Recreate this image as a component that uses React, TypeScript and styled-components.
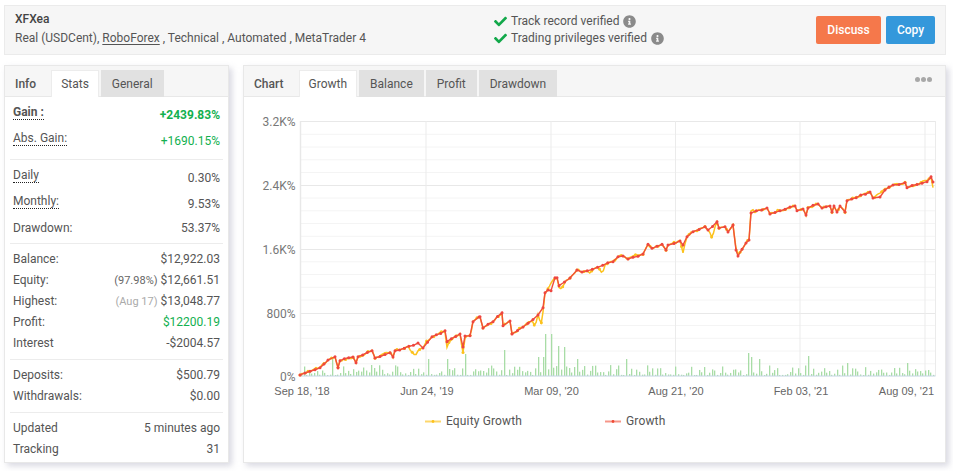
import React from "react";
import styled, { createGlobalStyle } from "styled-components";
import { FaCheck, FaInfoCircle } from "react-icons/fa";

const GROWTH: number[][] = [
  [300, 375], [320, 367.7], [328, 360], [335, 356.7], [338, 367.7], [340, 360.7], [353, 357], [356, 362.7],
  [358, 356.7], [372, 350.7], [375, 358], [390, 352.7], [393, 357], [395, 350.7], [418, 343], [423, 348],
  [432, 336.7], [445, 330.7], [447, 341.7], [460, 334], [463, 347], [465, 336], [470, 335.7], [473, 321.7],
  [479, 317], [480, 316.7], [483, 328], [493, 321.7], [502, 312.7], [503, 325.7], [510, 321], [512, 334],
  [523, 327], [538, 315], [543, 307.7], [545, 292.7], [548, 290], [551, 290.7], [555, 277.7], [557, 277.7],
  [559, 285.7], [570, 278], [577, 270], [582, 272], [613, 261.7], [618, 256.7], [623, 256], [628, 259],
  [643, 254], [648, 244.3], [652, 248.3], [662, 244.3], [666, 250], [668, 245], [680, 241], [683, 245],
  [687, 236.7], [693, 231.7], [705, 226.7], [708, 230], [717, 221.7], [719, 228], [725, 226.7], [728, 232],
  [733, 225], [736, 250], [738, 256], [746, 243], [749, 240], [751, 213], [767, 208], [770, 214],
  [795, 206], [797, 210.7], [803, 209], [806, 215], [808, 208], [818, 204], [822, 208], [830, 206],
  [832, 212], [834, 206], [837, 212], [840, 206], [845, 212], [847, 200.7], [870, 192], [873, 198],
  [880, 197], [885, 190], [893, 185], [905, 182.7], [907, 187.7], [927, 181.7], [931, 176.7], [933, 182],
];

// where the equity line leaves the growth line: [x, half width, depth]
const EQUITY_DIPS: number[][] = [
  [384, 6, -1.5], [415, 7, 13], [427, 4, -3], [447, 3, 5], [463, 3, 6], [475, 3, -1.5], [535, 3, 10], [541, 3, 14],
  [551, 4, -7], [562, 4, 6], [590, 6, 3], [602, 4, 8], [635, 6, -1.5], [683, 3, 8], [712, 4, 12], [737, 3, -3],
  [752, 3, -3], [880, 7, -4], [925, 5, -2], [933, 2, 5],
];

const BAR_PEAKS: Record<number, number> = {
  333: 17, 429: 17, 447: 17, 465: 22, 504: 26, 538: 19, 543: 19, 546: 42, 551: 42, 559: 30, 564: 29,
  577: 17, 626: 17, 749: 23, 751: 19, 759: 17, 808: 20, 847: 13, 907: 13,
};

const noise = (i: number) => Math.abs(Math.sin(i * 12.9898) * 43758.5453) % 1;

const barHeights = () => {
  const bars: number[][] = [];
  for (let i = 0; i < 244; i++) {
    const x = Math.round(301 + i * 2.6);
    const hash = noise(i);
    let h = 1 + hash * hash * 10;
    for (const key of Object.keys(BAR_PEAKS)) {
      if (Math.abs(Number(key) - x) < 1.4) h = BAR_PEAKS[Number(key)];
    }
    bars.push([x, h]);
  }
  return bars;
};

// split a polyline into short steps with a little roughness, like daily samples
const sample = (line: number[][], step: number) => {
  const out: number[][] = [];
  for (let i = 0; i < line.length - 1; i++) {
    const [x1, y1] = line[i];
    const [x2, y2] = line[i + 1];
    const n = Math.max(1, Math.round((x2 - x1) / step));
    for (let k = 0; k < n; k++) {
      const wobble = k === 0 ? 0 : (noise(out.length + 3) - 0.5) * 1.6;
      out.push([x1 + ((x2 - x1) * k) / n, y1 + ((y2 - y1) * k) / n + wobble]);
    }
  }
  out.push(line[line.length - 1]);
  return out;
};

const growthLine = sample(GROWTH, 5);

const equityLine = sample(GROWTH, 2).map(([x, y], i) => {
  let dy = (noise(i + 40) - 0.5) * 1.2;
  for (const [cx, half, depth] of EQUITY_DIPS) {
    const t = 1 - Math.abs(x - cx) / half;
    if (t > 0) dy += depth * t;
  }
  return [x, y + dy];
});

const toPoints = (line: number[][]) => line.map((p) => p.join(",")).join(" ");

const YTICKS = [
  { y: 121, label: "3.2K%" },
  { y: 185, label: "2.4K%" },
  { y: 249, label: "1.6K%" },
  { y: 313, label: "800%" },
  { y: 376, label: "0%" },
];
const XTICKS = [
  { x: 302, label: "Sep 18, '18" },
  { x: 427, label: "Jun 24, '19" },
  { x: 551.5, label: "Mar 09, '20" },
  { x: 676, label: "Aug 21, '20" },
  { x: 801, label: "Feb 03, '21" },
  { x: 906.5, label: "Aug 09, '21" },
];
const VLINES = [426, 551, 675.5, 800, 925, 935.5];

const GROUPS = [
  [
    { label: "Gain :", value: "+2439.83%", tip: true, strong: true, green: true },
    { label: "Abs. Gain:", value: "+1690.15%", tip: true, green: true },
  ],
  [
    { label: "Daily", value: "0.30%", tip: true },
    { label: "Monthly:", value: "9.53%", tip: true },
    { label: "Drawdown:", value: "53.37%", plain: true },
  ],
  [
    { label: "Balance:", value: "$12,922.03" },
    { label: "Equity:", note: "(97.98%)", value: "$12,661.51" },
    { label: "Highest:", note: "(Aug 17)", noteLight: true, value: "$13,048.77" },
    { label: "Profit:", value: "$12200.19", green: true },
    { label: "Interest", value: "-$2004.57" },
  ],
  [
    { label: "Deposits:", value: "$500.79" },
    { label: "Withdrawals:", value: "$0.00" },
  ],
  [
    { label: "Updated", value: "5 minutes ago" },
    { label: "Tracking", value: "31" },
  ],
];

const App = () => {
  const minor: number[] = [];
  for (let i = 0; i < 20; i++) {
    if (i % 5 !== 0) minor.push(121.5 + i * 12.75);
  }
  return (
    <Page>
      <Global />
      <TopBar>
        <Identity>
          <Name>XFXea</Name>
          <Meta>
            Real (USDCent), <u>RoboForex</u> , Technical , Automated , MetaTrader 4
          </Meta>
        </Identity>
        <Verified>
          <VerifiedRow>
            <FaCheck color="#12a84a" size={13} />
            Track record verified
            <FaInfoCircle color="#8a8a8a" size={13} />
          </VerifiedRow>
          <VerifiedRow>
            <FaCheck color="#12a84a" size={13} />
            Trading privileges verified
            <FaInfoCircle color="#8a8a8a" size={13} />
          </VerifiedRow>
        </Verified>
        <ActionButton $bg="#f5784b" $w={65}>Discuss</ActionButton>
        <ActionButton $bg="#3498db" $w={49}>Copy</ActionButton>
      </TopBar>
      <Columns>
        <Panel>
          <TabBar>
            <TabTitle>Info</TabTitle>
            <Tab $active>Stats</Tab>
            <Tab>General</Tab>
          </TabBar>
          <Stats>
            {GROUPS.map((group, g) => (
              <Group key={g} $loose={g < 2}>
                {group.map((row: any) => (
                  <Row key={row.label} $loose={g < 2 && !row.plain}>
                    <Label $tip={row.tip} $strong={row.strong}>{row.label}</Label>
                    <Value $green={row.green} $strong={row.strong}>
                      {row.note && <Note $light={row.noteLight}>{row.note}</Note>}
                      {row.value}
                    </Value>
                  </Row>
                ))}
              </Group>
            ))}
          </Stats>
        </Panel>
        <Panel>
          <TabBar>
            <TabTitle>Chart</TabTitle>
            <Tab $active>Growth</Tab>
            <Tab>Balance</Tab>
            <Tab>Profit</Tab>
            <Tab>Drawdown</Tab>
            <Dots>
              <i />
              <i />
              <i />
            </Dots>
          </TabBar>
          <ChartSvg viewBox="244 97 701 365" width={701} height={365}>
            {minor.map((y) => (
              <line key={y} x1={301} x2={935.5} y1={y} y2={y} stroke="#f4f4f4" />
            ))}
            {YTICKS.map((t) => (
              <g key={t.y}>
                {t.y !== 376 && <line x1={300} x2={935.5} y1={t.y + 0.5} y2={t.y + 0.5} stroke="#e8e8e8" />}
                <AxisValue x={295.5} y={t.y + 5} textAnchor="end">{t.label}</AxisValue>
              </g>
            ))}
            {VLINES.map((x) => (
              <line key={x} x1={x} x2={x} y1={121} y2={376} stroke="#ebebeb" />
            ))}
            <line x1={300.5} x2={300.5} y1={121} y2={376} stroke="#e8e8e8" strokeWidth={1.5} />
            {barHeights().map(([x, h]) => (
              <rect key={x} x={x} y={376 - h} width={1.3} height={h} fill="#a8dca6" />
            ))}
            <line x1={300} x2={935.5} y1={376} y2={376} stroke="#c4d4e4" />
            <polyline points={toPoints(equityLine)} fill="none" stroke="#fcc21d" strokeWidth={1.5} />
            {equityLine.map(([x, y], i) =>
              i % 4 === 0 ? <circle key={i} cx={x} cy={y} r={1.5} fill="#fcc21d" /> : null
            )}
            <polyline points={toPoints(growthLine)} fill="none" stroke="#f0503a" strokeWidth={1.4} />
            {growthLine.map(([x, y], i) => (
              <circle key={i} cx={x} cy={y} r={1.5} fill="#ee4640" />
            ))}
            {XTICKS.map((t) => (
              <DateLabel key={t.label} x={t.x} y={395} textAnchor="middle">{t.label}</DateLabel>
            ))}
            <line x1={425} x2={441} y1={421.5} y2={421.5} stroke="#fcc21d" strokeOpacity={0.65} strokeWidth={2} />
            <circle cx={433} cy={421.5} r={1.4} fill="#fcc21d" />
            <LegendText x={446} y={425}>Equity Growth</LegendText>
            <line x1={605} x2={621} y1={421.5} y2={421.5} stroke="#f0503a" strokeOpacity={0.6} strokeWidth={2} />
            <circle cx={613} cy={421.5} r={1.4} fill="#ee4b35" />
            <LegendText x={626} y={425}>Growth</LegendText>
          </ChartSvg>
        </Panel>
      </Columns>
    </Page>
  );
};

export default App;

const Global = createGlobalStyle`
  html, body {
    margin: 0;
    padding: 0;
    background: #fff;
    font-family: Roboto, "Liberation Sans", sans-serif;
  }
`;

const Page = styled.div`
  width: 953px;
  height: 471px;
  box-sizing: border-box;
  padding: 5px 7px 0 4px;
  color: #555;
  font-size: 12px;
  overflow: hidden;
`;

const TopBar = styled.div`
  height: 50px;
  box-sizing: border-box;
  display: flex;
  align-items: center;
  padding: 0 10px;
  gap: 5px;
  background: #f6f6f6;
  border: 1px solid #ebebeb;
`;

const Identity = styled.div`
  width: 474px;
  padding-bottom: 3px;
  display: flex;
  flex-direction: column;
  gap: 4px;
`;

const Name = styled.div`
  font-weight: 500;
  color: #444;
  line-height: 14px;
`;

const Meta = styled.div`
  line-height: 16px;
  white-space: nowrap;
  u {
    text-underline-offset: 2px;
  }
`;

const Verified = styled.div`
  flex: 1;
  padding-bottom: 1px;
  display: flex;
  flex-direction: column;
  gap: 1px;
`;

const VerifiedRow = styled.div`
  display: flex;
  align-items: center;
  gap: 4px;
  line-height: 16px;
`;

const ActionButton = styled.div<{ $bg: string; $w: number }>`
  width: ${({ $w }) => $w}px;
  height: 28px;
  display: flex;
  align-items: center;
  justify-content: center;
  border-radius: 2px;
  background: ${({ $bg }) => $bg};
  color: #fff;
  font-weight: 500;
`;

const Columns = styled.div`
  margin-top: 10px;
  display: grid;
  grid-template-columns: 225px 703px;
  gap: 14px;
`;

const Panel = styled.div`
  height: 398px;
  box-sizing: border-box;
  background: #fff;
  border: 1px solid #e8e8e8;
  box-shadow: 3px 3px 6px rgba(170, 170, 190, 0.45);
  display: flex;
  flex-direction: column;
`;

const TabBar = styled.div`
  height: 31px;
  flex: none;
  box-sizing: border-box;
  display: flex;
  align-items: flex-end;
  gap: 2px;
  background: #f6f6f6;
  border-bottom: 1px solid #e8e8e8;
`;

const TabTitle = styled.div`
  height: 27px;
  margin-bottom: -1px;
  display: flex;
  align-items: center;
  padding: 0 13px 0 10px;
  font-weight: 500;
`;

const Tab = styled.div<{ $active?: boolean }>`
  height: 27px;
  margin-bottom: -1px;
  box-sizing: border-box;
  display: flex;
  align-items: center;
  padding: 0 ${({ $active }) => ($active ? 9 : 11)}px;
  background: ${({ $active }) => ($active ? "#fff" : "#e1e1e1")};
  border: ${({ $active }) => ($active ? "1px solid #ececec" : "none")};
  border-bottom: none;
`;

const Dots = styled.div`
  margin: auto 13px auto auto;
  display: flex;
  gap: 1px;
  padding-bottom: 4px;
  i {
    width: 5px;
    height: 5px;
    border-radius: 50%;
    background: #a8a8a8;
  }
`;

const Stats = styled.div`
  flex: 1;
  padding: 0 5px;
`;

const Group = styled.div<{ $loose: boolean }>`
  padding: ${({ $loose }) => ($loose ? "5px 3px" : "4px 3px 6px")};
  border-bottom: 1px solid #ececec;
  &:last-child {
    border-bottom: none;
  }
`;

const Row = styled.div<{ $loose: boolean }>`
  height: ${({ $loose }) => ($loose ? 26 : 21)}px;
  display: flex;
  justify-content: space-between;
  align-items: center;
  white-space: nowrap;
`;

const Label = styled.span<{ $tip?: boolean; $strong?: boolean }>`
  font-weight: ${({ $strong }) => ($strong ? 700 : 400)};
  ${({ $tip }) => $tip && "border-bottom: 1px dotted #222; margin-top: -5px; line-height: 14px;"}
`;

const Value = styled.span<{ $green?: boolean; $strong?: boolean }>`
  color: ${({ $green }) => ($green ? "#12b04f" : "#555")};
  font-weight: ${({ $strong }) => ($strong ? 700 : 400)};
`;

const Note = styled.span<{ $light?: boolean }>`
  color: ${({ $light }) => ($light ? "#aaa" : "#666")};
  font-size: 11px;
  margin-right: 3px;
`;

const ChartSvg = styled.svg`
  display: block;
`;

const AxisValue = styled.text`
  font-family: Roboto, sans-serif;
  font-size: 12px;
  fill: #777;
`;

const DateLabel = styled.text`
  font-family: "Liberation Sans", sans-serif;
  font-size: 11px;
  fill: #666;
`;

const LegendText = styled.text`
  font-family: Roboto, sans-serif;
  font-size: 12px;
  letter-spacing: 0.15px;
  fill: #555;
`;
